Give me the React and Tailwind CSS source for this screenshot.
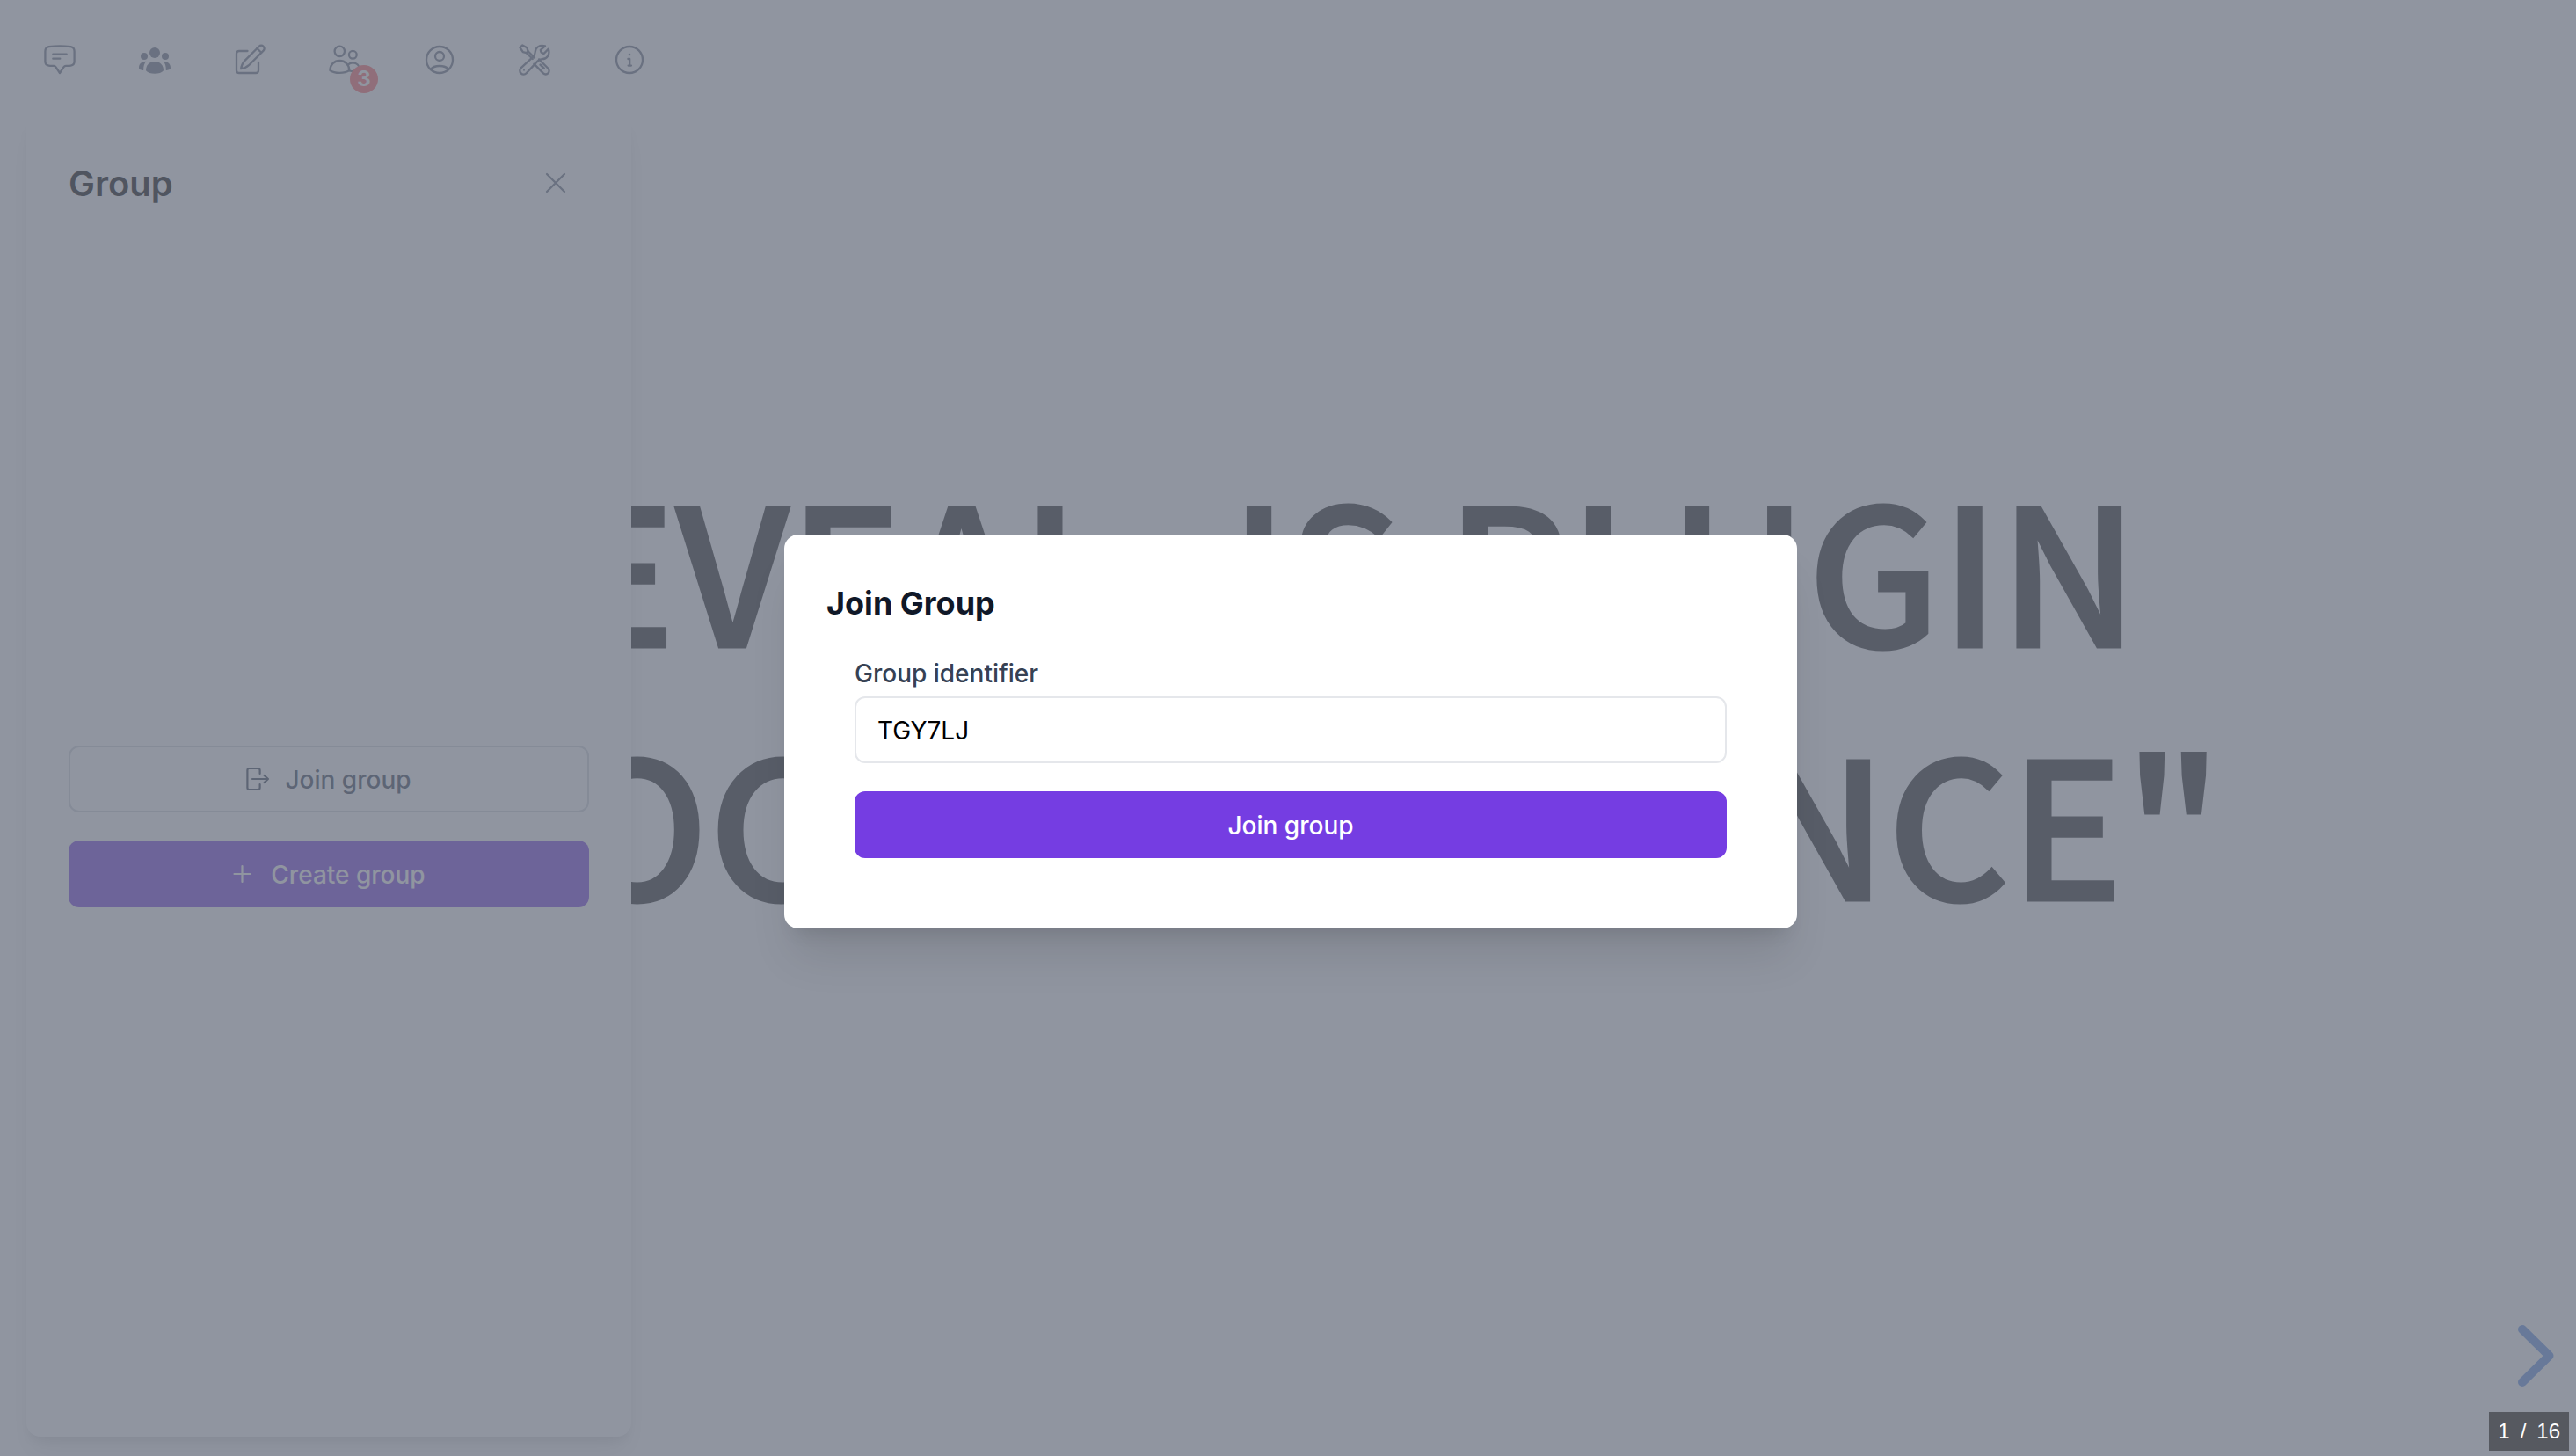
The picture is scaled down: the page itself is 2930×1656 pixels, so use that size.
import React from "react";

function Icon({ children, className = "size-9" }) {
  return (
    <svg
      viewBox="0 0 36 36"
      className={className}
      fill="none"
      stroke="currentColor"
      strokeWidth="2.3"
      strokeLinecap="round"
      strokeLinejoin="round"
      aria-hidden="true"
    >
      {children}
    </svg>
  );
}

const ChatIcon = () => (
  <Icon>
    <path d="M18 33L13.6 26.4Q12.6 25 11 24.9C8 24.8 6.7 24.8 5.5 24.6Q1.4 24 1.4 20V8.5Q1.4 3.8 5.6 3.2C12 2.4 24 2.4 30.4 3.2Q34.6 3.8 34.6 8.5V20Q34.6 24 30.5 24.6C29.3 24.8 28 24.8 25 24.9Q23.4 25 22.4 26.4Z" />
    <path d="M10.3 11.7H25.7M10.3 16.7H18.3" />
  </Icon>
);

const GroupIcon = () => (
  <Icon>
    <g fill="currentColor" stroke="none">
      <circle cx="18" cy="10" r="6" />
      <circle cx="6" cy="14" r="4" />
      <circle cx="30" cy="14" r="4" />
      <path d="M8 30.2C8 24 12 20 18 20S28 24 28 30.2C24.5 35 11.5 35 8 30.2Z" />
      <path d="M0 27.2C0 22.6 3 19.8 8.2 19.8C6 22.2 5.2 25 5.2 30C3 29.9 0 29 0 27.2Z" />
      <path d="M36 27.2C36 22.6 33 19.8 27.8 19.8C30 22.2 30.8 25 30.8 30C33 29.9 36 29 36 27.2Z" />
    </g>
  </Icon>
);

const EditIcon = () => (
  <Icon>
    <path d="M15.5 8H6Q3 8 3 11V30Q3 33 6 33H25Q28 33 28 30V21" />
    <path d="M28.7 2.7L12 19.4Q8.5 23.5 8.2 28.2Q13 27.8 17 24.2L33.6 7.6A3.4 3.4 0 0 0 28.7 2.7Z" />
    <path d="M26.4 5L31.2 9.8" />
  </Icon>
);

const PeopleIcon = () => (
  <Icon>
    <circle cx="12.3" cy="8.3" r="5.7" />
    <circle cx="27.3" cy="12.3" r="4.4" />
    <path d="M1.4 30C1.4 23.5 6 19 12.3 19S23.3 23.5 23.3 30C18 33.8 6.5 33.8 1.4 30Z" />
    <path d="M22.3 23.3C23.7 21.8 25.4 21.3 27.3 21.3C31.8 21.3 34.8 24.5 34.8 29C31.5 31.3 27 31.6 23.5 30.5" />
  </Icon>
);

const ProfileIcon = () => (
  <Icon>
    <circle cx="18" cy="18" r="15" />
    <circle cx="18" cy="14" r="5" />
    <path d="M7.9 29C9.7 26.4 13.5 25 18 25S26.3 26.4 28.1 29" />
  </Icon>
);

const ToolsIcon = () => (
  <Icon>
    <path d="M1.4 4L4.3 1.4L9.4 4.3L10.6 8.3L8.8 10.2L4.8 9.2Z" />
    <path d="M10.6 8.3L18 15.6M8.8 10.2L15.8 17" />
    <path d="M23 17.4L33.4 27.8A3.8 3.8 0 0 1 28 33.4L17.4 22.6" />
    <path d="M24.6 23.6L28.7 27.7" strokeWidth="2.6" />
    <path d="M2.5 27.3L16.3 14.6Q18.6 12.4 18.7 9.3C18.8 3.8 24 .6 30 2.4L24.8 6.8Q25 10.5 28.6 11L33.8 5.6C36 12 32 17.2 26.6 17.2Q23.6 17.2 21.4 19.6L8.7 33.3A4.3 4.3 0 0 1 2.5 27.3Z" />
    <circle cx="6" cy="29.8" r="1" fill="currentColor" stroke="none" />
  </Icon>
);

const InfoIcon = () => (
  <Icon>
    <circle cx="18" cy="18" r="15" />
    <circle cx="18" cy="12" r="1.3" fill="currentColor" stroke="none" />
    <path d="M16.4 17H18.2V24.4M16.6 24.6H20" />
  </Icon>
);

const tools = [
  { label: "Chat", Glyph: ChatIcon },
  { label: "Group", Glyph: GroupIcon },
  { label: "Annotate", Glyph: EditIcon },
  { label: "Participants", Glyph: PeopleIcon, badge: 3 },
  { label: "Profile", Glyph: ProfileIcon },
  { label: "Settings", Glyph: ToolsIcon },
  { label: "Info", Glyph: InfoIcon },
];

function Toolbar() {
  return (
    <nav className="flex gap-8 pt-[30px]">
      {tools.map(({ label, Glyph, badge }) => (
        <button
          key={label}
          type="button"
          aria-label={label}
          className="relative flex size-[76px] items-center justify-center text-gray-500"
        >
          <Glyph />
          {badge && (
            <span className="absolute right-0 bottom-0 flex size-8 items-center justify-center rounded-full bg-red-400 text-2xl font-bold text-white">
              {badge}
            </span>
          )}
        </button>
      ))}
    </nav>
  );
}

function Sidebar() {
  return (
    <aside className="mt-6 mb-[22px] flex w-[688px] flex-1 flex-col rounded-2xl bg-white px-12 pt-10 shadow-[0_20px_30px_-6px_rgba(0,0,0,0.1),0_8px_12px_-4px_rgba(0,0,0,0.1)]">
      <div className="flex items-center justify-between">
        <h2 className="pt-0.5 text-[40px] leading-14 font-semibold text-black">Group</h2>
        <button
          type="button"
          aria-label="Close"
          className="flex size-[76px] items-center justify-center text-gray-500"
        >
          <Icon>
            <path d="M8 8L28 28M28 8L8 28" />
          </Icon>
        </button>
      </div>
      <div className="flex flex-1 flex-col justify-center gap-8">
        <button
          type="button"
          className="flex h-[76px] items-center justify-center gap-4 rounded-xl border-2 border-gray-300 text-[28px] leading-10 font-medium text-gray-700"
        >
          <svg
            viewBox="0 0 28 28"
            className="size-7"
            fill="none"
            stroke="currentColor"
            strokeWidth="2.2"
            strokeLinecap="round"
            strokeLinejoin="round"
            aria-hidden="true"
          >
            <path d="M15.6 8V4Q15.6 2 13.6 2H3.4Q1.4 2 1.4 4V24Q1.4 26 3.4 26H13.6Q15.6 26 15.6 24V20" />
            <path d="M7 14H25M20.6 10L25 14L20.6 18" />
          </svg>
          <span className="pt-0.5">Join group</span>
        </button>
        <button
          type="button"
          className="flex h-[76px] items-center justify-center gap-4 rounded-xl bg-[#753de2] text-[28px] leading-10 font-medium text-white"
        >
          <svg
            viewBox="0 0 28 28"
            className="size-7"
            fill="none"
            stroke="currentColor"
            strokeWidth="2.2"
            strokeLinecap="round"
            aria-hidden="true"
          >
            <path d="M2.5 14H20.5M11.5 5V23" />
          </svg>
          <span className="pt-0.5">Create group</span>
        </button>
      </div>
    </aside>
  );
}

function JoinDialog() {
  return (
    <section
      role="dialog"
      aria-modal="true"
      aria-labelledby="join-title"
      className="w-full max-w-6xl rounded-2xl bg-white p-12 shadow-[0_40px_50px_-10px_rgba(0,0,0,0.1),0_16px_20px_-12px_rgba(0,0,0,0.1)]"
    >
      <h2 id="join-title" className="pt-0.5 text-4xl leading-14 font-bold text-gray-900">
        Join Group
      </h2>
      <form className="flex flex-col p-8" onSubmit={(e) => e.preventDefault()}>
        <label htmlFor="group-id" className="text-[28px] leading-10 font-medium text-gray-700">
          Group identifier
        </label>
        <input
          id="group-id"
          type="text"
          defaultValue="TGY7LJ"
          className="mt-1.5 h-[76px] rounded-xl border-2 border-gray-200 px-6 pt-0.5 text-[28px] leading-10 text-black outline-none"
        />
        <button
          type="submit"
          className="mt-8 h-[76px] rounded-xl bg-[#753de2] pt-0.5 text-[28px] leading-10 font-medium text-white"
        >
          Join group
        </button>
      </form>
    </section>
  );
}

export default function App() {
  return (
    <div className="relative h-screen overflow-hidden bg-white font-['Inter',sans-serif]">
      <main className="flex h-full items-center justify-center pb-21">
        <h1 className="text-center font-['Noto_Sans_CJK_JP',sans-serif] text-[216px] leading-72 font-medium whitespace-nowrap text-[#222] [-webkit-text-stroke:3px_#222]">
          REVEAL.JS PLUGIN
          <br />
          "SOCIAL PRESENCE"
        </h1>
      </main>

      <div className="absolute inset-y-0 left-0 flex flex-col pl-[30px]">
        <Toolbar />
        <Sidebar />
      </div>

      <button
        type="button"
        aria-label="Next slide"
        className="absolute right-6 bottom-[78px] text-[#5f91e4]"
      >
        <svg
          viewBox="0 0 44 72"
          className="h-18 w-11"
          fill="none"
          stroke="currentColor"
          strokeWidth="10"
          strokeLinecap="round"
          strokeLinejoin="round"
          aria-hidden="true"
        >
          <path d="M7 6L37.5 36L7 66" />
        </svg>
      </button>

      <div className="absolute inset-0 flex items-center justify-center bg-[#6b7280]/75 pt-2 pl-1.5">
        <JoinDialog />
      </div>

      <a
        href="#/0"
        className="absolute right-2 bottom-1.5 flex gap-3 bg-black/40 p-2.5 font-['Liberation_Sans',sans-serif] text-2xl leading-6 text-white"
      >
        <span>1</span>
        <span>/</span>
        <span>16</span>
      </a>
    </div>
  );
}
